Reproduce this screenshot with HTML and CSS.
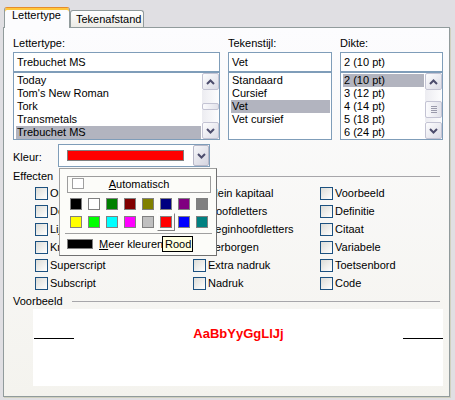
FILE: index.html
```html
<!DOCTYPE html>
<html lang="nl">
<head>
<meta charset="UTF-8" />
<title>Lettertype</title>
<link rel="stylesheet" href="styles.css">
</head>
<body>
<div class="dialog">
  <div class="tabs">
    <div class="tab active">Lettertype</div>
    <div class="tab">Tekenafstand</div>
  </div>

  <div class="panel">
    <!-- font / style / size -->
    <div class="fonts">
      <div class="field">
        <div class="label">Lettertype:</div>
        <div class="input">Trebuchet MS</div>
        <div class="list">
          <ul class="items">
            <li>Today</li>
            <li>Tom's New Roman</li>
            <li>Tork</li>
            <li>Transmetals</li>
            <li class="sel">Trebuchet MS</li>
          </ul>
          <div class="scroll">
            <div class="sb-btn"><svg width="9" height="6"><path d="M1 5 4.5 1.5 8 5" fill="none" stroke="#4d4d6d" stroke-width="2"/></svg></div>
            <div class="track"><div class="thumb small"></div></div>
            <div class="sb-btn"><svg width="9" height="6"><path d="M1 1 4.5 4.5 8 1" fill="none" stroke="#4d4d6d" stroke-width="2"/></svg></div>
          </div>
        </div>
      </div>

      <div class="field">
        <div class="label">Tekenstijl:</div>
        <div class="input">Vet</div>
        <div class="list">
          <ul class="items">
            <li>Standaard</li>
            <li>Cursief</li>
            <li class="sel">Vet</li>
            <li>Vet cursief</li>
          </ul>
        </div>
      </div>

      <div class="field">
        <div class="label">Dikte:</div>
        <div class="input">2 (10 pt)</div>
        <div class="list">
          <ul class="items">
            <li class="sel">2 (10 pt)</li>
            <li>3 (12 pt)</li>
            <li>4 (14 pt)</li>
            <li>5 (18 pt)</li>
            <li>6 (24 pt)</li>
          </ul>
          <div class="scroll">
            <div class="sb-btn"><svg width="9" height="6"><path d="M1 5 4.5 1.5 8 5" fill="none" stroke="#4d4d6d" stroke-width="2"/></svg></div>
            <div class="track"><div class="thumb big"><i></i><i></i><i></i><i></i></div></div>
            <div class="sb-btn"><svg width="9" height="6"><path d="M1 1 4.5 4.5 8 1" fill="none" stroke="#4d4d6d" stroke-width="2"/></svg></div>
          </div>
        </div>
      </div>
    </div>

    <!-- colour -->
    <div class="kleur">
      <span class="klabel">Kleur:</span>
      <div class="combo">
        <span class="swatch"></span>
        <span class="drop"><svg width="9" height="6"><path d="M1 1 4.5 4.5 8 1" fill="none" stroke="#4d4d6d" stroke-width="2"/></svg></span>
      </div>
    </div>

    <!-- effects -->
    <div class="group-head"><span>Effecten</span><span class="rule"></span></div>
    <div class="effects">
      <label class="cb"><i></i>Onderstrepen</label>
      <label class="cb"><i></i>Doorhalen</label>
      <label class="cb"><i></i>Lijn erboven</label>
      <label class="cb"><i></i>Knipperen</label>
      <label class="cb"><i></i>Superscript</label>
      <label class="cb"><i></i>Subscript</label>
      <label class="cb"><i></i>Klein kapitaal</label>
      <label class="cb"><i></i>Hoofdletters</label>
      <label class="cb"><i></i>Beginhoofdletters</label>
      <label class="cb"><i></i>Verborgen</label>
      <label class="cb"><i></i>Extra nadruk</label>
      <label class="cb"><i></i>Nadruk</label>
      <label class="cb"><i></i>Voorbeeld</label>
      <label class="cb"><i></i>Definitie</label>
      <label class="cb"><i></i>Citaat</label>
      <label class="cb"><i></i>Variabele</label>
      <label class="cb"><i></i>Toetsenbord</label>
      <label class="cb"><i></i>Code</label>
    </div>

    <!-- preview -->
    <div class="group-head"><span>Voorbeeld</span><span class="rule"></span></div>
    <div class="preview">
      <div class="sample">
        <span class="bar"></span>
        <span class="text">AaBbYyGgLlJj</span>
        <span class="bar"></span>
      </div>
    </div>
  </div>
</div>

<!-- colour picker dropdown -->
<div class="popup">
  <div class="auto"><span class="box"></span><span class="auto-text"><u>A</u>utomatisch</span></div>
  <div class="colors">
    <span class="sw"><b style="background:#000"></b></span>
    <span class="sw"><b style="background:#fff"></b></span>
    <span class="sw"><b style="background:#008000"></b></span>
    <span class="sw"><b style="background:#800000"></b></span>
    <span class="sw"><b style="background:#808000"></b></span>
    <span class="sw"><b style="background:#000080"></b></span>
    <span class="sw"><b style="background:#800080"></b></span>
    <span class="sw"><b style="background:#808080"></b></span>
    <span class="sw"><b style="background:#ffff00"></b></span>
    <span class="sw"><b style="background:#00ff00"></b></span>
    <span class="sw"><b style="background:#00ffff"></b></span>
    <span class="sw"><b style="background:#ff00ff"></b></span>
    <span class="sw"><b style="background:#c0c0c0"></b></span>
    <span class="sw on"><b style="background:#ff0000"></b></span>
    <span class="sw"><b style="background:#0000ff"></b></span>
    <span class="sw"><b style="background:#008080"></b></span>
  </div>
  <div class="sep"></div>
  <div class="more"><span class="blk"></span><span><u>M</u>eer kleuren</span></div>
</div>
<div class="tip">Rood</div>

</body>
</html>
```

FILE: styles.css
```css
*{box-sizing:border-box;margin:0;padding:0}

body{
  width:455px;height:400px;overflow:hidden;position:relative;
  background:#e0dfe3;
  font:11px "Liberation Sans",Arial,sans-serif;color:#000;
}
.dialog{padding:7px 5px 3px 3px;height:400px;display:flex;flex-direction:column}

/* tabs */
.tabs{display:flex;align-items:flex-end;height:20px;padding-left:1px;position:relative;z-index:1}
.tab{
  width:74px;height:17px;padding-left:5px;line-height:16px;
  border:1px solid #919b9c;border-bottom:none;border-radius:3px 3px 0 0;
  background:linear-gradient(#fff,#ecebe6);
}
.tab.active{
  width:66px;height:21px;margin-bottom:-1px;padding-left:7px;line-height:15px;
  border-top:1px solid #e68b2c;box-shadow:inset 0 2px #ffc73c;
  background:#fcfcfe;
}

.panel{
  flex:1;display:flex;flex-direction:column;
  border:1px solid #919b9c;box-shadow:1px 1px 0 #d0d0bf;
  background:linear-gradient(#fcfcfe,#f4f3ee);
  padding:9px 5px 0 9px;
}

/* font lists */
.fonts{display:grid;grid-template-columns:207px 104px 103px;column-gap:8px}
.label{height:13px;line-height:13px;margin-bottom:2px}
.input{height:20px;border:1px solid #7f9db9;background:#fff;padding-left:3px;line-height:18px}
.list{height:68px;border:1px solid #7f9db9;background:#fff;display:flex}
.items{flex:1;list-style:none;padding:1px 1px 0 2px}
.items li{height:13px;line-height:13px;padding-left:1px;white-space:nowrap}
.items li.sel{background:#b2b4bf}

.scroll{width:17px;display:flex;flex-direction:column}
.sb-btn{
  height:17px;display:flex;align-items:center;justify-content:center;
  border:1px solid #c3c3d3;border-radius:2px;
  background:linear-gradient(135deg,#fdfdfe,#dcdce6);
}
.track{flex:1;background:linear-gradient(90deg,#ececf1,#fdfdfe)}
.thumb{
  border:1px solid #c3c3d3;border-radius:2px;
  background:linear-gradient(90deg,#fbfbfd,#e2e2ea);
}
.thumb.small{height:7px;margin-top:13px}
.thumb.big{height:17px;margin-top:11px;display:flex;flex-direction:column;align-items:center;justify-content:center;gap:1px}
.thumb.big i{display:block;width:6px;height:1px;background:#9a9aab}

/* colour */
.kleur{display:flex;align-items:center;margin-top:4px;height:23px}
.klabel{width:45px;padding-top:2px}
.combo{
  width:152px;height:23px;display:flex;align-items:center;padding-left:8px;
  border:1px solid #7f9db9;background:#fff;
}
.swatch{width:117px;height:11px;background:#f00;border:1px solid #808080}
.drop{
  width:16px;height:21px;margin-left:auto;
  display:flex;align-items:center;justify-content:center;
  border:1px solid #b8b8c8;border-radius:2px;
  background:linear-gradient(135deg,#f6f6f9,#d5d5e0);
}

/* group boxes */
.group-head{display:flex;margin-top:3px;height:13px;line-height:13px}
.group-head .rule{flex:1;height:1px;margin:6px 4px 0 9px;background:#a7a6aa}

.effects{
  display:grid;grid-template-columns:158px 127px 1fr;grid-template-rows:repeat(6,18px);
  grid-auto-flow:column;margin:1px 0 0 22px;
}
.cb{display:flex;align-items:center;gap:2px;white-space:nowrap}
.cb i{width:13px;height:13px;border:1px solid #1c5180;background:linear-gradient(135deg,#dcdcd7,#fff)}

.preview{height:77px;margin:1px 1px 0 20px;background:#fff;padding:18px 0 0 1px}
.sample{display:flex;align-items:flex-end;height:14px}
.sample .bar{width:40px;height:1px;background:#000;margin-bottom:2px}
.sample .text{flex:1;text-align:center;line-height:14px;font-size:13px;font-weight:bold;color:#f00}

/* dropdown palette */
.popup{
  position:absolute;left:59px;top:168px;width:158px;height:88px;z-index:2;
  border:1px solid;border-color:#a0a0a0 #707070 #707070 #a0a0a0;
  background:#fcfcf9;padding:7px 0 0 7px;
}
.auto{width:144px;height:17px;border:1px solid #9d9d9d;display:flex;align-items:flex-start}
.auto .box{width:12px;height:11px;margin:1px 0 0 4px;border:1px solid #a0a0a0;background:#fff}
.auto-text{flex:1;padding-right:16px;text-align:center;line-height:15px}
.colors{display:grid;grid-template-columns:repeat(8,18px);grid-auto-rows:18px;margin-top:2px}
.sw{width:18px;height:18px;padding:3px}
.sw b{display:block;width:12px;height:12px;border:1px solid #808080}
.sw.on{padding:2px;border:1px solid;border-color:#fff #808080 #808080 #fff}
.sep{height:1px;width:147px;margin:2px 0 0 -2px;background:#a0a0a0}
.more{display:flex;align-items:center;height:10px;margin-top:5px;gap:6px}
.more .blk{width:26px;height:10px;background:#000;border:1px solid #808080}

.tip{
  position:absolute;left:162px;top:236px;width:31px;height:16px;z-index:3;
  border:1px solid #000;background:#ffffe1;padding-left:2px;line-height:14px;
}
```
